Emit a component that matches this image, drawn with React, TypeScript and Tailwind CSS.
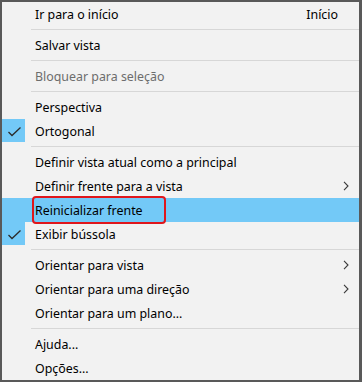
import React from "react";

type Item =
  | { kind: "sep" }
  | {
      kind: "item";
      label: string;
      shortcut?: string;
      checked?: boolean;
      disabled?: boolean;
      sub?: boolean;
      highlight?: boolean;
      marked?: boolean;
    };

const items: Item[] = [
  { kind: "item", label: "Ir para o início", shortcut: "Início" },
  { kind: "sep" },
  { kind: "item", label: "Salvar vista" },
  { kind: "sep" },
  { kind: "item", label: "Bloquear para seleção", disabled: true },
  { kind: "sep" },
  { kind: "item", label: "Perspectiva" },
  { kind: "item", label: "Ortogonal", checked: true },
  { kind: "sep" },
  { kind: "item", label: "Definir vista atual como a principal" },
  { kind: "item", label: "Definir frente para a vista", sub: true },
  { kind: "item", label: "Reinicializar frente", highlight: true, marked: true },
  { kind: "item", label: "Exibir bússola", checked: true },
  { kind: "sep" },
  { kind: "item", label: "Orientar para vista", sub: true },
  { kind: "item", label: "Orientar para uma direção", sub: true },
  { kind: "item", label: "Orientar para um plano..." },
  { kind: "sep" },
  { kind: "item", label: "Ajuda..." },
  { kind: "item", label: "Opções..." },
];

function Check() {
  return (
    <svg width="23" height="23" viewBox="0 0 23 23">
      <path d="M6.5 13 L10 16.5 L18.5 8.5" fill="none" stroke="#2b2b2b" strokeWidth="1.3" />
    </svg>
  );
}

function Chevron() {
  return (
    <svg width="6" height="10" viewBox="0 0 6 10">
      <path d="M1 0.8 L5 5 L1 9.2" fill="none" stroke="#3a3a3a" strokeWidth="1.1" />
    </svg>
  );
}

export default function App() {
  return (
    <div
      className="w-[362px] h-[382px] overflow-hidden bg-[#f2f2f2] border-t-2 border-l-2 border-b-2 border-r-[3px] border-[#595959] text-[12.4px] text-black"
      style={{ fontFamily: '"Noto Sans", "Open Sans", sans-serif' }}
    >
      {items.map((it, i) =>
        it.kind === "sep" ? (
          <div key={i} className="h-[7px] flex items-center pl-[29px]">
            <div className="h-px w-full bg-[#d7d7d7]" />
          </div>
        ) : (
          <div
            key={i}
            className={`relative h-[24px] flex items-start ${it.highlight ? "bg-[#73c9f7]" : ""}`}
          >
            <div className="w-[33px] h-[24px] shrink-0">
              {it.checked && (
                <div className="w-[23px] h-[23px] bg-[#73c9f7]">
                  <Check />
                </div>
              )}
            </div>
            <div
              className={`flex-1 h-[24px] leading-[24px] pt-px ${
                it.disabled ? "text-[#6d6d6d]" : "text-black"
              }`}
            >
              {it.label}
            </div>
            {it.shortcut && (
              <div className="h-[24px] leading-[24px] pt-px pr-[21px]">{it.shortcut}</div>
            )}
            {it.sub && (
              <div className="h-[24px] flex items-center pr-[10px]">
                <Chevron />
              </div>
            )}
            {it.marked && (
              <div className="absolute left-[30px] top-[-2px] w-[134px] h-[28px] border-2 border-[#e0161b] rounded-[4px]" />
            )}
          </div>
        )
      )}
    </div>
  );
}
